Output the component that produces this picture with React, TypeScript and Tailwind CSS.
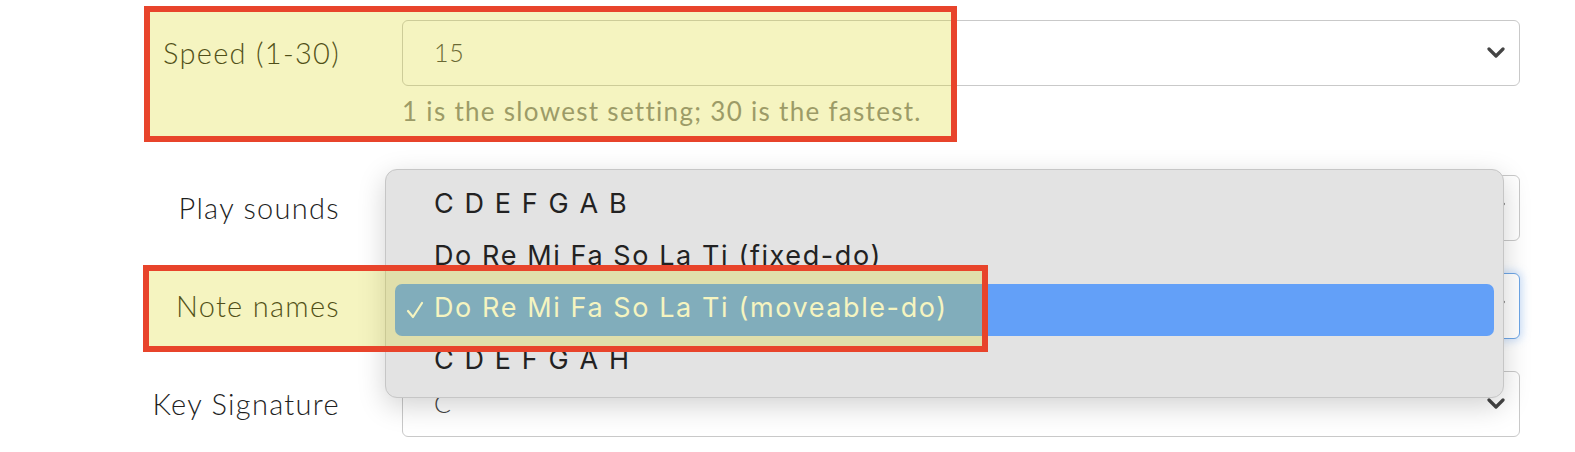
import { FC, ReactNode } from 'react';

const labelFont = { fontFamily: 'Lato, "Open Sans", sans-serif' };
const menuFont = { fontFamily: 'Inter, "Liberation Sans", sans-serif' };

const Chevron: FC = () => (
  <svg width="18" height="12" viewBox="0 0 18 12" className="shrink-0">
    <polyline points="2,2 9,9 16,2" fill="none" stroke="#444" strokeWidth="3.2" strokeLinecap="round" strokeLinejoin="round" />
  </svg>
);

interface FakeSelectProps {
  value?: string;
  focused?: boolean;
}

const FakeSelect: FC<FakeSelectProps> = ({ value, focused }) => (
  <div
    className={`h-[66px] bg-white rounded-[6px] border flex items-center justify-between pl-[31px] pr-[14px] ${
      focused ? 'border-[#6ea6e6] shadow-[0_0_8px_2px_rgba(110,166,240,0.35)]' : 'border-[#c9c9c9]'
    }`}
  >
    <span className="text-[25px] font-light tracking-[0.8px] text-[#444]" style={labelFont}>
      {value}
    </span>
    <Chevron />
  </div>
);

const Label: FC<{ children: ReactNode }> = ({ children }) => (
  <div className="h-[66px] flex items-center justify-end text-[29px] font-light tracking-[1.3px] text-[#1f1f1f]" style={labelFont}>
    {children}
  </div>
);

const menuItems = [
  'C D E F G A B',
  'Do Re Mi Fa So La Ti (fixed-do)',
  'Do Re Mi Fa So La Ti (moveable-do)',
  'C D E F G A H',
];

export default function App() {
  return (
    <div className="relative w-[1575px] h-[452px] bg-white overflow-hidden">
      {/* form rows */}
      <div className="pt-[20px] pr-[55px] flex flex-col">
        <div className="grid grid-cols-[340px_1fr] gap-x-[62px]">
          <Label>Speed (1-30)</Label>
          <div>
            <FakeSelect value="15" />
            <p className="mt-[10px] text-[26px] leading-[30px] tracking-[1.3px] text-[#888]" style={labelFont}>
              1 is the slowest setting; 30 is the fastest.
            </p>
          </div>
        </div>
        <div className="mt-[49px] flex flex-col gap-[32px]">
          <div className="grid grid-cols-[340px_1fr] gap-x-[62px]">
            <Label>Play sounds</Label>
            <FakeSelect value="Yes" />
          </div>
          <div className="grid grid-cols-[340px_1fr] gap-x-[62px]">
            <Label>Note names</Label>
            <FakeSelect value="Do Re Mi Fa So La Ti (moveable-do)" focused />
          </div>
          <div className="grid grid-cols-[340px_1fr] gap-x-[62px]">
            <Label>Key Signature</Label>
            <FakeSelect value="C" />
          </div>
        </div>
      </div>

      {/* open native dropdown */}
      <div
        className="absolute left-[385px] top-[169px] w-[1119px] h-[229px] rounded-[12px] bg-[#e3e3e3] border border-[#c6c6c6] shadow-[0_8px_28px_rgba(0,0,0,0.18)] pt-[10px] px-[9px]"
        style={menuFont}
      >
        {menuItems.map((item, i) => {
          const selected = i === 2;
          return (
            <div
              key={item}
              className={`h-[52px] flex items-center rounded-[7px] text-[27px] tracking-[1.6px] ${
                selected ? 'bg-[#63a0f8] text-white' : 'text-[#222]'
              }`}
            >
              <div className="w-[39px] flex justify-center">
                {selected && (
                  <svg width="20" height="20" viewBox="0 0 20 20">
                    <polyline points="3,11 8,17 17,3" fill="none" stroke="white" strokeWidth="2.2" strokeLinecap="round" strokeLinejoin="round" />
                  </svg>
                )}
              </div>
              <span className="pb-[3px]">{item}</span>
            </div>
          );
        })}
      </div>

      {/* annotation highlights */}
      <div className="absolute left-[144px] top-[6px] w-[813px] h-[136px] border-[6px] border-[#e8442b] bg-[rgba(215,212,10,0.26)]" />
      <div className="absolute left-[143px] top-[265px] w-[845px] h-[87px] border-[6px] border-[#e8442b] bg-[rgba(215,212,10,0.26)]" />
    </div>
  );
}
